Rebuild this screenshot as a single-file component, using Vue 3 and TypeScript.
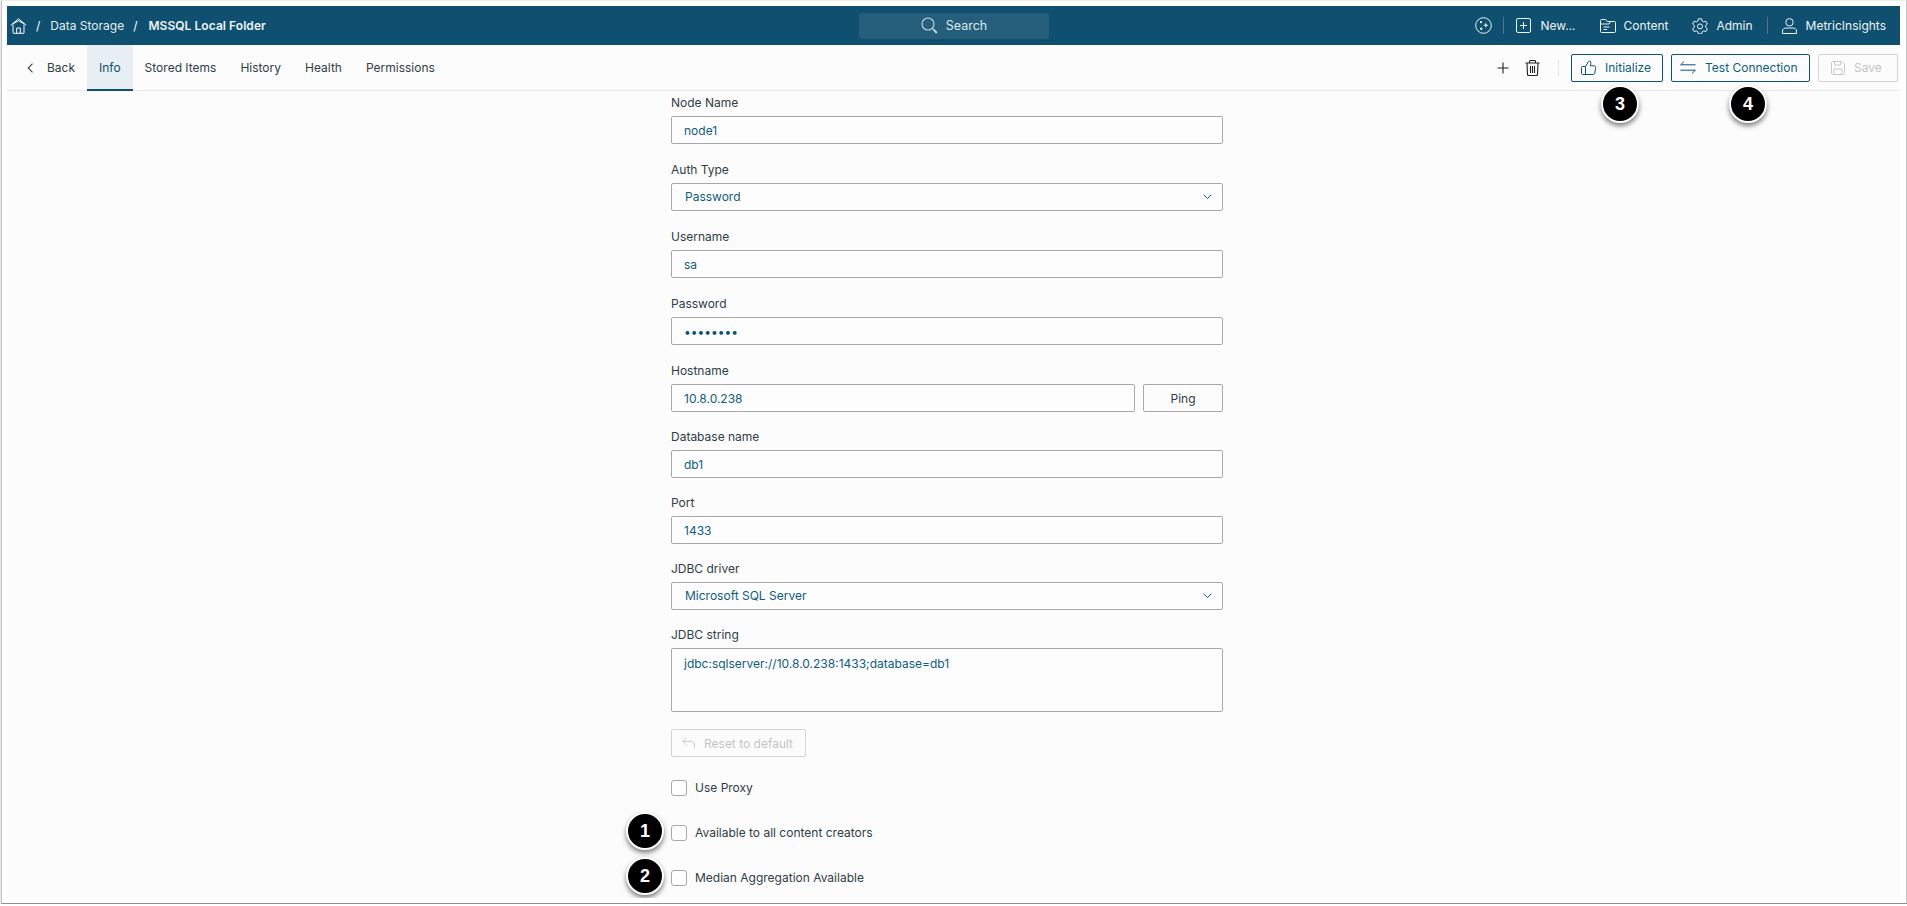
<script setup lang="ts">
interface Field { label: string; value: string; kind: 'input' | 'select' | 'password' | 'ping' }
const upper: Field[] = [
  { label: 'Node Name', value: 'node1', kind: 'input' },
  { label: 'Auth Type', value: 'Password', kind: 'select' },
  { label: 'Username', value: 'sa', kind: 'input' },
  { label: 'Password', value: '••••••••', kind: 'password' },
  { label: 'Hostname', value: '10.8.0.238', kind: 'ping' },
  { label: 'Database name', value: 'db1', kind: 'input' },
  { label: 'Port', value: '1433', kind: 'input' },
  { label: 'JDBC driver', value: 'Microsoft SQL Server', kind: 'select' },
]
const tabs = ['Info', 'Stored Items', 'History', 'Health', 'Permissions']
</script>

<template>
  <div class="frame">
    <div class="app">
      <header class="topbar">
        <div class="crumbs">
          <svg class="home" width="17" height="16" viewBox="0 0 17 16" fill="none" stroke="currentColor" stroke-width="1">
            <path d="M.8 7.200 8.500.8l7.700 6.400M3 5.800l5.500-3 5.500 3M3 6.500v8.300a.5.5 0 0 0 .5.500h10a.5.5 0 0 0 .5-.5V6.500M6.700 15.200V10h3.600v5.200" />
          </svg>
          <span class="sep first">/</span>
          <span class="crumb">Data Storage</span>
          <span class="sep second">/</span>
          <strong class="crumb-strong">MSSQL Local Folder</strong>
        </div>
        <div class="search">
          <svg width="17" height="17" viewBox="0 0 17 17" fill="none" stroke="#c5d6df" stroke-width="1.100">
            <circle cx="7" cy="7" r="6" />
            <path d="m11.400 11.400 1.200 1.200" />
            <path d="m12.400 12.400 3.400 3.600" stroke-width="2" />
          </svg>
          <span>Search</span>
        </div>
        <nav class="top-actions">
          <svg class="ico spark" width="17" height="17" viewBox="0 0 17 17" fill="none" stroke="currentColor">
            <circle cx="8.500" cy="8.500" r="7.800" />
            <path d="M10.800 5.600 11.500 7.500 13.400 8.200 11.500 8.900 10.800 10.800 10.100 8.900 8.200 8.200 10.100 7.500z" fill="currentColor" stroke="none" />
            <circle cx="6" cy="5.200" r="1.100" fill="currentColor" stroke="none" />
            <circle cx="6.200" cy="11.800" r="1.200" fill="currentColor" stroke="none" />
          </svg>
          <span class="vline first-line"></span>
          <svg class="ico new-ico" width="15" height="15" viewBox="0 0 15 15" fill="none" stroke="currentColor">
            <rect x=".5" y=".5" width="14" height="14" rx="1.500" />
            <path d="M7.500 4v7M4 7.500h7" />
          </svg>
          <span class="top-label new-label">New...</span>
          <svg class="ico folder-ico" width="16" height="14" viewBox="0 0 16 14" fill="none" stroke="currentColor">
            <path d="M.5 12.500v-11a1 1 0 0 1 1-1h4.200l1.500 2h7.300a1 1 0 0 1 1 1v9a1 1 0 0 1-1 1h-13a1 1 0 0 1-1-1ZM.5 5h8.500l1.500-2.500M3.500 8h6M3.500 10.500h3.500" />
          </svg>
          <span class="top-label content-label">Content</span>
          <svg class="ico gear-ico" width="16" height="16" viewBox="0 0 16 16" fill="none" stroke="currentColor">
            <path d="M6.400.8h3.200l.5 2.200 1.500.9 2.200-.7 1.600 2.800-1.700 1.500v1.800l1.700 1.500-1.600 2.800-2.200-.7-1.500.9-.5 2.200H6.400l-.5-2.200-1.500-.9-2.200.7L.600 10.800l1.700-1.500V7.500L.600 6l1.600-2.800 2.200.7 1.500-.9z" />
            <circle cx="8" cy="8.400" r="2.500" />
          </svg>
          <span class="top-label admin-label">Admin</span>
          <span class="vline second-line"></span>
          <svg class="ico user-ico" width="15" height="16" viewBox="0 0 15 16" fill="none" stroke="currentColor">
            <circle cx="7.500" cy="4.300" r="3.700" />
            <path d="M.5 15.500v-2.500c0-2 2-3 3.500-3h7c1.500 0 3.500 1 3.500 3v2.500z" />
          </svg>
          <span class="top-label">MetricInsights</span>
        </nav>
      </header>

      <div class="toolbar">
        <div class="back">
          <svg width="7" height="10" viewBox="0 0 7 10" fill="none" stroke="#3c4a52" stroke-width="1.100"><path d="M5.500.7 1.200 5l4.300 4.300" /></svg>
          <span>Back</span>
        </div>
        <div v-for="(t, i) in tabs" :key="t" class="tab" :class="{ active: i === 0 }">{{ t }}</div>
        <div class="spacer"></div>
        <svg class="plus" width="12" height="12" viewBox="0 0 12 12" stroke="#222" stroke-width="1.100"><path d="M6 .5v11M.5 6h11" /></svg>
        <svg class="trash" width="15" height="16" viewBox="0 0 15 16" fill="none" stroke="#222" stroke-width="1.100">
          <path d="M.5 3h14M2 3l.5 11.500a1 1 0 0 0 1 1h8a1 1 0 0 0 1-1L13 3M4.500 3V1.500a1 1 0 0 1 1-1h4a1 1 0 0 1 1 1V3M5.500 6v7M7.500 6v7M9.500 6v7" />
        </svg>
        <span class="vline tool-line"></span>
        <button class="btn init">
          <svg width="15" height="15" viewBox="0 0 15 15" fill="none" stroke="#0f5274">
            <path d="M4.500 6.500v8M.5 7.500a1 1 0 0 1 1-1h3l3-5c1.500-1.200 2.800.2 2.300 1.700L9.300 5.800h3.900c1.200 0 1.700 1 1.500 2l-1 5.500c-.2.800-.8 1.200-1.500 1.200H1.500a1 1 0 0 1-1-1z" />
          </svg>
          <span>Initialize</span>
        </button>
        <button class="btn test">
          <svg width="16" height="13" viewBox="0 0 16 13" fill="none" stroke="#0f5274">
            <path d="M4 .5.600 3.800h15M12 12.500l3.400-3.300H.4" />
          </svg>
          <span>Test Connection</span>
        </button>
        <button class="btn save">
          <svg width="14" height="14" viewBox="0 0 14 14" fill="none" stroke="#c8c8c8">
            <path d="M.5 1.500a1 1 0 0 1 1-1h9l3 3v9a1 1 0 0 1-1 1h-11a1 1 0 0 1-1-1zM3.500.5v3.500h6V.5M3 13.500V8h8v5.500" />
          </svg>
          <span>Save</span>
        </button>
      </div>

      <main class="content">
        <form class="form" @submit.prevent>
          <div v-for="f in upper" :key="f.label" class="field">
            <label>{{ f.label }}</label>
            <div v-if="f.kind === 'ping'" class="ping-row">
              <div class="box grow">{{ f.value }}</div>
              <button class="ping" type="button">Ping</button>
            </div>
            <div v-else-if="f.kind === 'select'" class="box select">
              <span>{{ f.value }}</span>
              <svg width="9" height="6" viewBox="0 0 9 6" fill="none" stroke="#0f5274"><path d="m.7.8 3.800 3.800L8.300.8" /></svg>
            </div>
            <div v-else class="box" :class="{ dots: f.kind === 'password' }">{{ f.value }}</div>
          </div>
          <div class="jdbc">
            <label>JDBC string</label>
            <div class="box area">jdbc:sqlserver://10.8.0.238:1433;database=db1</div>
          </div>
          <button class="reset" type="button">
            <svg width="13" height="12" viewBox="0 0 13 12" fill="none" stroke="#c8c8c8"><path d="M4.500.6.800 4.300l3.700 3.700M.8 4.300h8.700c1.700 0 2.900 1.300 2.900 3v4" /></svg>
            <span>Reset to default</span>
          </button>
          <div class="check proxy"><span class="cb"></span><span class="txt">Use Proxy</span></div>
          <div class="check all"><span class="cb"></span><span class="txt">Available to all content creators</span><span class="badge left">1</span></div>
          <div class="check median"><span class="cb"></span><span class="txt">Median Aggregation Available</span><span class="badge left">2</span></div>
        </form>
      </main>
      <span class="badge b3">3</span>
      <span class="badge b4">4</span>
    </div>
  </div>
</template>

<style>
html, body { margin: 0; background: #fff; }
</style>

<style scoped>
* { box-sizing: border-box; }
.frame {
  width: 1906px;
  height: 904px;
  margin-left: 1px;
  padding: 5px;
  background: #fff;
  border: 1px solid #c4c4c4;
  border-top-color: #ececec;
  border-bottom-color: #8e8e8e;
  box-shadow: 0 1px 2px rgba(0, 0, 0, .25);
  font-family: Inter, "Liberation Sans", sans-serif;
  font-size: 12px;
}
.app { position: relative; width: 1893px; height: 892px; background: #fcfcfc; display: flex; flex-direction: column; overflow: hidden; }
.topbar { height: 39px; flex: none; background: #0f4f6f; color: #eef4f7; display: grid; grid-template-columns: 1fr 190px 1fr; align-items: center; }
.crumbs { display: flex; align-items: center; padding-left: 3px; }
.home { color: #fff; }
.sep { margin: 0 9px; color: #fff; }
.first { margin-right: 10px; }
.second { margin-right: 11px; }
.crumb { color: #e3edf2; }
.crumb-strong { color: #eef4f7; font-weight: 600; letter-spacing: .05px; }
.search { height: 26px; padding-left: 1px; background: #265f7c; border-radius: 3px; display: flex; align-items: center; justify-content: center; gap: 8px; color: #dbe7ed; font-size: 12.500px; }
.top-actions { display: flex; align-items: center; justify-content: flex-end; padding-right: 14px; }
.ico { flex: none; }
.top-label { white-space: nowrap; }
.vline { width: 1px; height: 17px; background: #4b7a92; flex: none; }
.first-line { margin: 0 12px 0 11px; }
.new-label { margin-left: 9px; margin-right: 24px; }
.content-label { margin-left: 8px; margin-right: 24px; }
.admin-label { margin-left: 8px; }
.second-line { margin: 0 14px; }
.user-ico { margin-right: 9px; }
.toolbar { height: 46px; flex: none; display: flex; align-items: stretch; border-bottom: 1px solid #e8e8e8; color: #2f3d46; padding-right: 2px; }
.back { width: 80px; display: flex; align-items: center; gap: 13px; padding-left: 20px; }
.tab { display: flex; align-items: center; padding: 0 12px; }
.tab.active { background: #e7eff3; color: #0f4f6f; border-bottom: 2px solid #0f4f6f; margin-bottom: -1px; }
.spacer { flex: 1; }
.plus { align-self: center; margin-right: 16px; }
.trash { align-self: center; }
.tool-line { align-self: center; height: 16px; background: #e6e6e6; margin: 0 12px 0 18px; }
.btn { align-self: center; height: 28px; border-radius: 2px; background: transparent; font: inherit; display: flex; align-items: center; padding: 0; margin: 0; }
.init, .test { border: 1px solid #0f5274; color: #0f5c80; }
.init { width: 92px; padding-left: 9px; gap: 9px; margin-right: 8px; }
.test { width: 139px; padding-left: 8px; gap: 9px; margin-right: 8px; }
.save { width: 80px; padding-left: 12px; gap: 9px; border: 1px solid #d4d4d4; color: #c4c4c4; }
.content { flex: 1; overflow: hidden; }
.form { width: 552px; margin-left: 664px; margin-top: -1px; display: flex; flex-direction: column; }
.field { flex: none; display: flex; flex-direction: column; height: 66px; padding-top: 6px; }
.field:nth-child(-n+4) { height: 67px; }
.jdbc { flex: none; display: flex; flex-direction: column; padding-top: 6px; }
label { height: 20px; line-height: 13px; color: #2f3d46; }
.box { flex: none; height: 28px; border: 1px solid #a8a8a8; border-radius: 2px; padding: 0 12px; display: flex; align-items: center; color: #0f5c80; background: #fdfdfd; }
.select { justify-content: space-between; padding: 0 10px 1px 13px; }
.dots { color: #0f4f6f; }
.ping-row { display: flex; gap: 8px; }
.grow { flex: 1; }
.ping { width: 80px; height: 28px; border: 1px solid #a8a8a8; border-radius: 2px; background: transparent; font: inherit; color: #2f3d46; padding: 0; }
.area { height: 64px; align-items: flex-start; padding-top: 7px; }
.reset { flex: none; margin-top: 17px; width: 135px; height: 28px; border: 1px solid #d4d4d4; border-radius: 2px; background: transparent; font: inherit; color: #c4c4c4; display: flex; align-items: center; gap: 9px; padding: 0 0 0 10px; }
.check { flex: none; position: relative; display: flex; align-items: center; gap: 8px; height: 16px; color: #2f3d46; }
.txt { margin-bottom: 2px; }
.proxy { margin-top: 23px; }
.all { margin-top: 29px; }
.median { margin-top: 29px; }
.cb { width: 16px; height: 16px; flex: none; border: 1px solid #a8a8a8; border-radius: 3px; background: #fff; }
.badge { position: absolute; width: 38px; height: 38px; border-radius: 50%; background: #000; border: 2px solid #fff; box-shadow: 0 3px 5px rgba(0, 0, 0, .5); color: #fff; font: 700 18px/34px "Liberation Sans", Arial, sans-serif; text-align: center; }
.left { left: -45px; top: -13px; }
.b3 { left: 1594px; top: 79px; }
.b4 { left: 1722px; top: 79px; }
</style>
